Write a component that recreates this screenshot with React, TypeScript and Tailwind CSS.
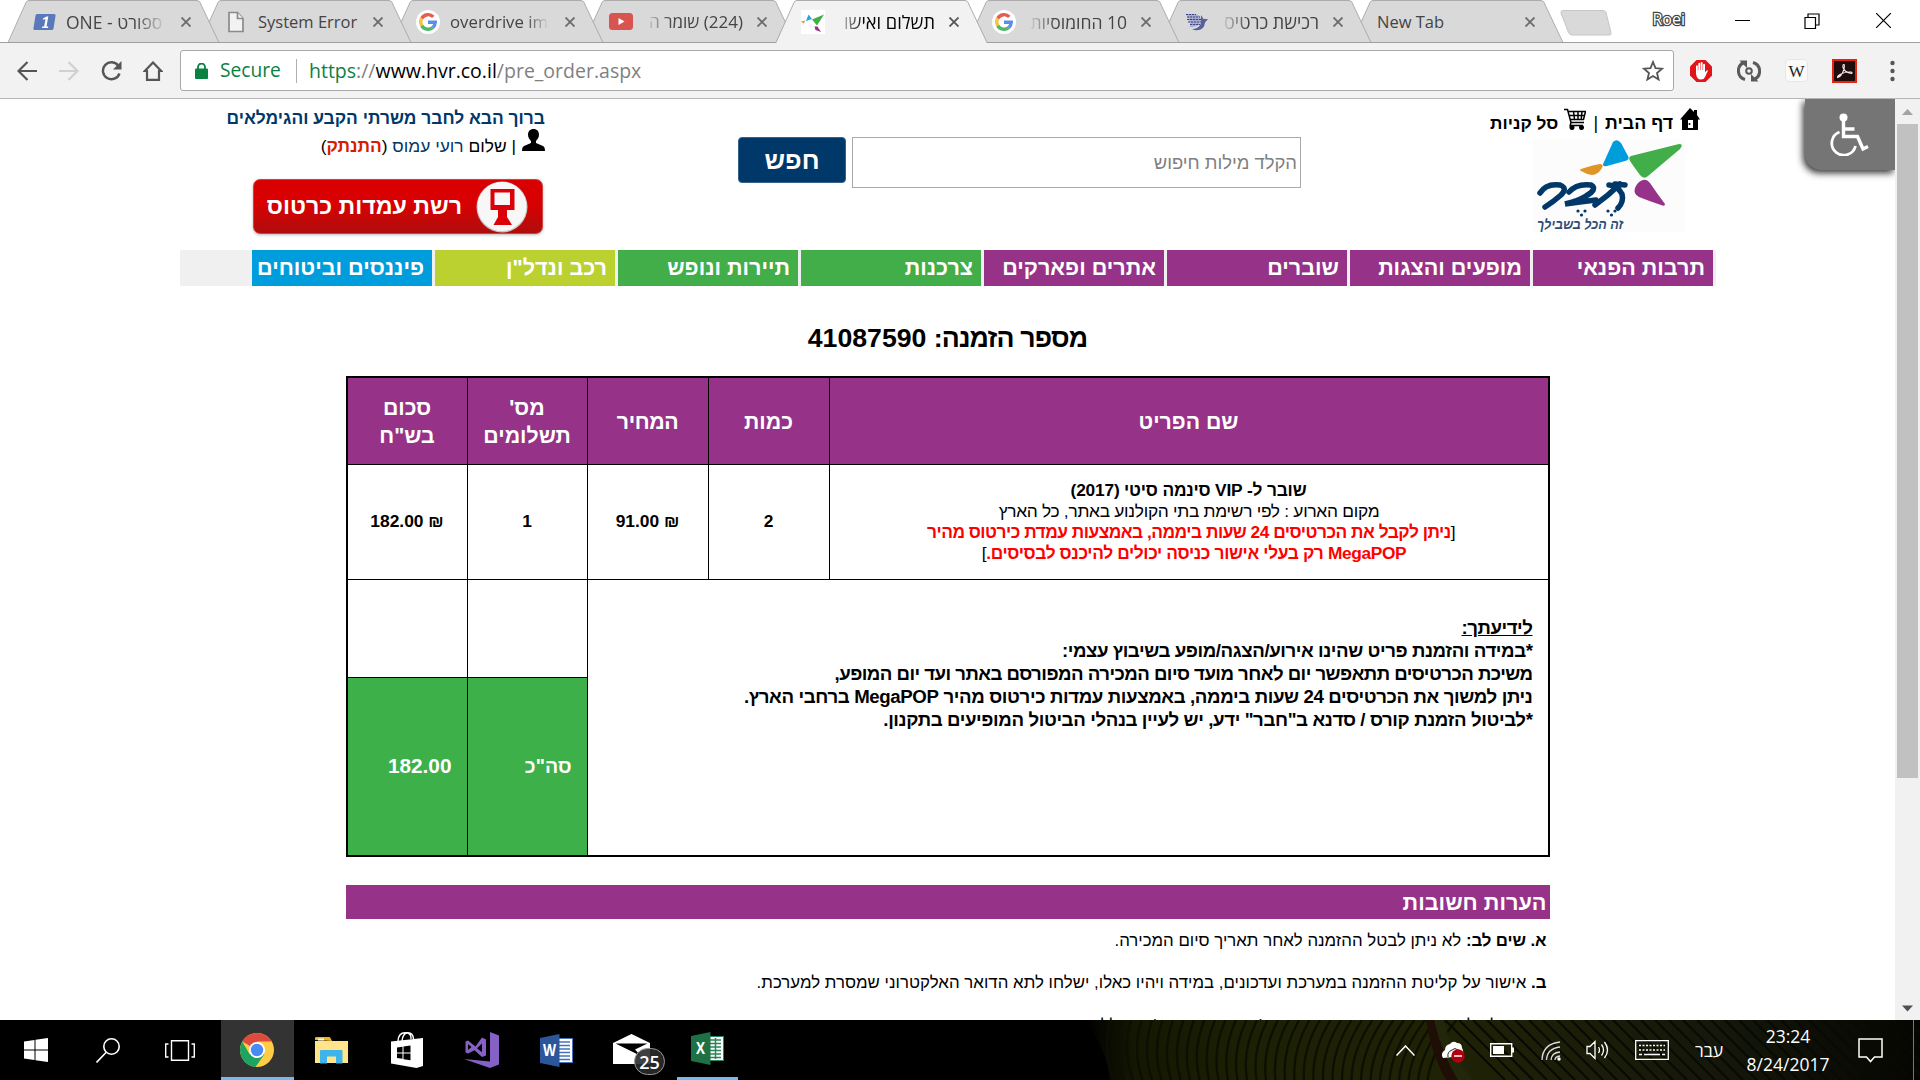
import React from 'react';
import clsx from 'clsx';

/* ---------- Favicons ---------- */

const OneIcon = () => (
  <svg viewBox="0 0 23 18" className="h-[18px] w-[23px]">
    <path d="M4 1h17a1.5 1.5 0 0 1 1.500 2l-2 12.500a2 2 0 0 1-2 1.500H2a1.500 1.500 0 0 1-1.500-2L2.500 2.500A2 2 0 0 1 4 1z" fill="#5b78bb" />
    <path d="M10 5.500 13.500 3.500h1.800L13.500 13.500h1.800l-.3 1.500H9l.3-1.500h1.900l1.300-7.500-2.700.8z" fill="#fff" />
  </svg>
);

const FileIcon = () => (
  <svg viewBox="0 0 18 22" className="ml-[2px] h-[22px] w-[18px]" fill="#f2f2f2" stroke="#8b8b8b" strokeWidth="1.700">
    <path d="M2 1.500h8.500l5.500 6v13H2z" />
    <path d="M10.500 1.500v6H16" />
  </svg>
);

const GoogleIcon = () => (
  <svg viewBox="0 0 24 24" className="-ml-px h-6 w-6">
    <circle cx="12" cy="12" r="12" fill="#fff" />
    <g fill="none" strokeWidth="3.400">
      <path d="M17.300 6.900A7.300 7.300 0 0 0 5.700 8.400" stroke="#e75b50" />
      <path d="M5.700 8.400a7.300 7.300 0 0 0 0 7.200" stroke="#f7c53c" />
      <path d="M5.700 15.600a7.300 7.300 0 0 0 11 2" stroke="#55b56b" />
      <path d="M16.700 17.600A7.300 7.300 0 0 0 19.300 12.300H12" stroke="#5a8df0" />
    </g>
  </svg>
);

const YoutubeIcon = () => (
  <svg viewBox="0 0 24 17" className="h-[17px] w-6">
    <rect width="24" height="17" rx="3.500" fill="#d9534f" />
    <path d="M9.500 5v7l6-3.500z" fill="#fff" />
  </svg>
);

const HvrIcon = () => (
  <svg viewBox="0 0 24 24" className="h-6 w-6">
    <rect width="24" height="24" fill="#fff" />
    <path d="M5 11 7.500 4.500 11 9z" fill="#29a3e0" />
    <path d="M0 11.500l4.500-1-2 3z" fill="#e0952a" />
    <path d="M11 9.500 23 4.500 16 15.500z" fill="#41ae49" />
    <path d="M13.500 16.500l3 0 3.500 5.500-5.500-2z" fill="#963388" />
  </svg>
);

const ShipIcon = () => (
  <svg viewBox="0 0 24 20" className="h-5 w-6">
    <path d="M1 2h9l5 2 1 4-2 5-6 2H4l2-2z" fill="#a9add0" />
    <path d="M1 2.500h10M2 5h13M2 7.500h14M3 10h13M5 12.500h10" stroke="#3d4288" strokeWidth="1.200" strokeDasharray="2.200 .8" />
    <path d="M16 3l2.500 4H23l-3 3.500-1 4c-3 4-8 5-12 2.500 5 0 8.500-2.500 9-7z" fill="#5a5f9b" />
  </svg>
);

/* ---------- Browser tabs ---------- */

type TabData = { title: string; rtl?: boolean; icon?: React.ReactNode; active?: boolean; z: string; text: string };

const fadeLeft = '[mask-image:linear-gradient(to_left,black_70%,transparent_98%)]';

const tabs: TabData[] = [
  { title: 'ONE - ספורט', icon: <OneIcon />, z: 'z-[8]', text: 'text-[17.500px] [mask-image:linear-gradient(to_right,black_68%,transparent)]' },
  { title: 'System Error', icon: <FileIcon />, z: 'z-[7]', text: 'text-[16.500px]' },
  { title: 'overdrive ima', icon: <GoogleIcon />, z: 'z-[6]', text: 'text-[16.800px] [mask-image:linear-gradient(to_right,black_75%,transparent_98%)]' },
  { title: '(224) שומר ה', rtl: true, icon: <YoutubeIcon />, z: 'z-[5]', text: `text-[17px] ${fadeLeft}` },
  { title: 'תשלום ואישו', rtl: true, icon: <HvrIcon />, active: true, z: 'z-[9]', text: `text-[18.200px] ${fadeLeft}` },
  { title: '10 החומוסיות', rtl: true, icon: <GoogleIcon />, z: 'z-[4]', text: `text-[17.500px] ${fadeLeft}` },
  { title: 'רכישת כרטיס', rtl: true, icon: <ShipIcon />, z: 'z-[3]', text: `text-[18px] ${fadeLeft}` },
  { title: 'New Tab', z: 'z-[2]', text: 'text-[16.500px]' },
];

function Tab({ title, rtl, icon, active, z, text }: TabData) {
  return (
    <div className={clsx('relative -mr-[19px] flex h-[43px] w-[211px] shrink-0 items-center pl-[25px]', z)}>
      <svg viewBox="0 0 211 43" className="absolute inset-0 h-[43px] w-[211px]">
        <path
          d="M0 43 L18 2.500 Q19 .5 21 .5 H189 Q191 .5 192 2.500 L211 43z"
          fill={active ? '#f2f2f2' : '#d9d9d9'}
        />
        <path d="M0 42.500 L18 2.500 Q19 .5 21 .5 H189 Q191 .5 192 2.500 L211 42.500" fill="none" stroke="#acacac" />
        {!active && <path d="M0 42.500H211" stroke="#9f9f9f" />}
      </svg>
      {icon && <span className="relative flex w-[33px] items-center">{icon}</span>}
      <span
        dir={rtl ? 'rtl' : 'ltr'}
        className={clsx(
          'relative h-7 whitespace-nowrap font-["Open_Sans",sans-serif] leading-7',
          icon ? 'w-[101px]' : 'w-[134px]',
          active ? 'text-black' : 'text-[#444]',
          text,
        )}
      >
        {title}
      </span>
      <svg viewBox="0 0 10 10" className="relative ml-3.5 h-2.5 w-2.5" stroke={active ? '#555' : '#6b6b6b'} strokeWidth="1.800">
        <path d="M.5.5l9 9M9.500.5l-9 9" />
      </svg>
    </div>
  );
}

function TabStrip() {
  return (
    <div className="relative flex h-[43px] shrink-0 border-b border-[#9f9f9f] bg-white pl-2">
      {tabs.map((t) => (
        <Tab key={t.title} {...t} />
      ))}
      <svg viewBox="0 0 52 26" className="ml-4 mt-[10px] h-[26px] w-[52px] shrink-0">
        <path d="M3 .5H43q2 0 3 2l5 20q.5 2.500-1.500 2.500H12q-2.500 0-3.500-2.500L1 3Q.5.5 3 .5z" fill="#d9d9d9" stroke="#c6c6c6" />
      </svg>
      <div className="ml-auto flex h-[41px] items-center pr-[29px]">
        <span className='mr-[50px] pb-1 font-["Open_Sans",sans-serif] text-[16px] text-white [-webkit-text-stroke:2.500px_#444] [paint-order:stroke_fill]'>
          Roei
        </span>
        <svg viewBox="0 0 15 15" className="mr-[54px] h-[15px] w-[15px]" stroke="#000"><path d="M0 7.500h15" /></svg>
        <svg viewBox="0 0 16 16" className="mr-[56px] h-4 w-4" fill="none" stroke="#000" strokeWidth="1.200">
          <path d="M1 4.500h10.500v11H1zM4 4.500V1h11v11h-3.500" />
        </svg>
        <svg viewBox="0 0 15 15" className="h-[15px] w-[15px]" stroke="#000" strokeWidth="1.200"><path d="M0 0l15 15M15 0L0 15" /></svg>
      </div>
    </div>
  );
}

/* ---------- Browser toolbar ---------- */

function Toolbar() {
  return (
    <div className="flex h-14 shrink-0 items-center border-b border-[#b6b6b6] bg-[#f2f2f2] pl-[17px]">
      <svg viewBox="0 0 20 20" className="mr-[22px] h-5 w-5" fill="none" stroke="#555" strokeWidth="2.200">
        <path d="M10.500 1 1.500 10l9 9M1.500 10H20" />
      </svg>
      <svg viewBox="0 0 20 20" className="mr-[22px] h-5 w-5" fill="none" stroke="#d0d0d0" strokeWidth="2.200">
        <path d="M9.500 1l9 9-9 9M18.500 10H0" />
      </svg>
      <svg viewBox="0 0 21 20" className="mr-[21px] h-5 w-[21px]" fill="none" stroke="#555" strokeWidth="2.400">
        <path d="M17.500 5A8.500 8.500 0 1 0 18.500 12.500" />
        <path d="M20.500 0v8.500h-8.500z" fill="#555" stroke="none" />
      </svg>
      <svg viewBox="0 0 20 20" className="mr-[17px] h-5 w-5" fill="none" stroke="#555" strokeWidth="2.200">
        <path d="M10 1.500 1.800 10H4v8.800h12V10h2.200z" />
      </svg>
      <div className='flex h-[41px] w-[1494px] items-center rounded-[3px] border border-[#a9a9a9] bg-white pl-[14px] pr-[9px] font-["Open_Sans",sans-serif] text-[19.2px]'>
        <svg viewBox="0 0 13 16" className="mr-3 h-4 w-[13px]">
          <rect y="5.500" width="13" height="10.500" rx="1" fill="#0b8043" />
          <path d="M3 6V4a3.500 3.500 0 0 1 7 0v2" fill="none" stroke="#0b8043" strokeWidth="1.800" />
        </svg>
        <span className="w-[61px] text-[#0b8043]">Secure</span>
        <span className="ml-[15px] mr-3 h-6 w-px bg-[#b0b0b0]" />
        <span className="text-[19.500px] text-[#808080]">
          <span className="text-[#0b8043]">https</span>://<span className="text-black">www.hvr.co.il</span>/pre_order.aspx
        </span>
        <svg viewBox="0 0 22 21" className="ml-auto h-[21px] w-[22px]" fill="none" stroke="#555" strokeWidth="1.800">
          <path d="M11 2l2.500 6.200 6.500.5-5 4.300 1.600 6.500L11 16l-5.600 3.500L7 13 2 8.700l6.500-.5z" />
        </svg>
      </div>
      <svg viewBox="0 0 24 24" className="ml-[15px] h-6 w-6">
        <path d="M7.500 1h9L23 7.500v9L16.500 23h-9L1 16.500v-9z" fill="#e0151a" />
        <path d="M7 14.500V7q1-1.500 1.800 0v4.500h.5V4.500q1-1.500 1.900 0V11h.5V3.800q1-1.500 1.900 0V11h.5V5.500q1-1.500 1.900 0v8l1.200-1.800q1.500-1 1.600.4L16 18q-1 2.500-4 2.500-4.500 0-5-6z" fill="#fff" />
      </svg>
      <svg viewBox="0 0 24 24" className="ml-6 h-6 w-6" fill="none" stroke="#5a5a5a" strokeWidth="3">
        <path d="M7 3.500A9 9 0 0 0 8 20.500M17 20.500A9 9 0 0 0 16 3.500" />
        <path d="M2.500 1.500h7.500v7.500zM21.500 22.500h-7.500v-7.500z" fill="#5a5a5a" stroke="none" />
        <circle cx="12" cy="12" r="2.800" strokeWidth="2" />
      </svg>
      <span className="ml-6 flex h-[23px] w-[23px] items-center justify-center rounded-sm border border-[#e6e6e6] bg-[#fafafa] pt-0.5 font-['Liberation_Serif',serif] text-[17px] text-[#222]">
        W
      </span>
      <svg viewBox="0 0 25 24" className="ml-6 h-6 w-[25px]">
        <rect x="1" y="1" width="23" height="22" fill="#1e0c0e" stroke="#e8230f" strokeWidth="2" />
        <path d="M5.500 18.500q4-1 6.200-7.500 1.300-4.800.3-5.500-1.500-.3-1 3 1.500 5 8.500 6 1.500-.8-.5-1.500-6-.5-11 2.500-3 2-2.500 3z" fill="none" stroke="#f3e9e9" strokeWidth="1.100" />
      </svg>
      <svg viewBox="0 0 5 22" className="ml-[33px] h-[22px] w-[5px]" fill="#555">
        <circle cx="2.500" cy="3" r="2.200" /><circle cx="2.500" cy="11" r="2.200" /><circle cx="2.500" cy="19" r="2.200" />
      </svg>
    </div>
  );
}

/* ---------- Site header ---------- */

const HvrLogo = () => (
  <svg viewBox="0 0 152 93" className="mr-[15px] mt-[9px] h-[93px] w-[152px]">
    <rect width="152" height="93" fill="#fcfcfd" />
    <path d="M80 3q4-4 8 1l7 13q2 4-3 5l-18 5q-6 1-3-4z" fill="#009ddd" />
    <path d="M48 30q12-4 19-5 4 0 2 4-4 7-10 7-6-1-11-4-2-1 0-2z" fill="#e09528" />
    <path d="M98 17q20-5 48-12 5 0 1 5l-32 27q-4 4-8-1-6-8-10-14-2-4 1-5z" fill="#41ae49" />
    <path d="M110 41q4-1 7 3 8 12 15 21 0 3-4 1-12-4-22-8-6-3-4-9 3-7 8-8z" fill="#963388" />
    <g fill="none" stroke="#003869" strokeWidth="5.500" strokeLinecap="round">
      <path d="M7 54q6-10 20-8 8 3 1 10-8 7-16 12" />
      <path d="M36 53q8-9 22-7 7 4-5 11-8 5-21 8 14-2 31-4" />
      <path d="M62 66q14-10 25-21M76 46q8 0 13 9 2 8-4 14M82 45l10 1" />
    </g>
    <g fill="#003869">
      <circle cx="45" cy="72" r="1.600" /><circle cx="52" cy="72" r="1.600" /><circle cx="48.500" cy="76" r="1.600" />
      <circle cx="75" cy="72" r="1.600" /><circle cx="82" cy="72" r="1.600" /><circle cx="78.500" cy="76" r="1.600" />
    </g>
    <text x="47" y="90" textAnchor="middle" textLength="86" lengthAdjust="spacingAndGlyphs" fontSize="14" fontStyle="italic" fontWeight="bold" fill="#2b4c75" fontFamily="Liberation Sans, sans-serif">
      זה הכל בשבילך
    </text>
  </svg>
);

function SiteHeader() {
  return (
    <div className="flex h-[151px] items-start">
      <div className="flex w-[365px] flex-col items-end pt-[9px]">
        <div dir="rtl" className="text-[17.400px] font-bold leading-5 text-[#003869]">
          ברוך הבא לחבר משרתי הקבע והגימלאים
        </div>
        <div dir="rtl" className="mt-px flex h-7 items-start gap-[6px] text-[17.400px] leading-[22px]">
          <svg viewBox="0 0 23 22" className="h-[22px] w-[23px]">
            <path d="M11.500 0c3.600 0 5.500 2.400 5.500 5.800S14.800 11 14 12v2l7 3q2 1 2 5H0q0-4 2-5l7-3v-2C8.200 11 6 9.200 6 5.800S7.900 0 11.500 0z" />
          </svg>
          <div className="pt-[6px]">
            | שלום <span className="text-[#003869]">רועי עמוס</span> (<b className="text-[#d71a00]">התנתק</b>)
          </div>
        </div>
        <div dir="rtl" className="mr-[2px] mt-[22px] flex h-[55px] w-[290px] items-center gap-[14px] rounded-[7px] border border-[#c44] bg-linear-to-b from-[#d80000] from-45% to-[#b00c0c] pr-[14px] shadow-[0_1px_3px_#bbb]">
          <svg viewBox="0 0 52 52" className="h-[52px] w-[52px] shrink-0">
            <circle cx="26" cy="26" r="25.500" fill="#c9c3c3" />
            <circle cx="26" cy="25.500" r="24.500" fill="#f7f7f7" />
            <path d="M14.500 8h24v21H31V36l5 8H17.500l4.500-8V29H14.500z" fill="#dc0008" />
            <rect x="18.500" y="11.500" width="15.500" height="12.500" fill="#f7f7f7" />
          </svg>
          <span className="whitespace-nowrap text-[23.200px] font-bold text-white">רשת עמדות כרטוס</span>
        </div>
      </div>
      <div className="ml-[193px] mt-[38px] flex items-start gap-[6px]">
        <button className="h-[46px] w-[108px] rounded-[4px] border border-[#33628c] bg-[#003869] text-[25.500px] font-bold text-white">
          חפש
        </button>
        <div dir="rtl" className="flex h-[51px] w-[449px] items-center border border-[#a9a9a9] px-[3px] text-[18.4px] text-[#808080]">
          הקלד מילות חיפוש
        </div>
      </div>
      <div className="ml-auto flex flex-col items-end pr-4 pt-[9px]">
        <div dir="rtl" className="flex h-[22px] items-start gap-[7px] text-[17.800px] font-bold leading-[31px]">
          <svg viewBox="0 0 20 22" className="h-[22px] w-5">
            <path d="M10 0l4 4V2h3v5l3 4.500h-2V22H2V11.500H0z" />
            <path d="M8 12h5v8H8z" fill="#fff" />
            <circle cx="9.500" cy="16" r="1" />
          </svg>
          <span>דף הבית</span>
          <span className="font-normal">|</span>
          <svg viewBox="0 0 22 22" className="h-[22px] w-[22px]" fill="none" stroke="#000" strokeWidth="1.500">
            <path d="M0 1.500h3.500L7 14.500h13M4 3.500h17.500L19.500 11.500H6M5 7.500h16M9.500 3.500l1 8M14 3.500v8M18 3.500l-.8 8M7 14.500l-.8 3H19" />
            <circle cx="8" cy="19.500" r="1.800" fill="#000" /><circle cx="17.500" cy="19.500" r="1.800" fill="#000" />
          </svg>
          <span className="-mr-px text-[17.300px]">סל קניות</span>
        </div>
        <HvrLogo />
      </div>
    </div>
  );
}

const navItems = [
  { label: 'תרבות הפנאי', color: 'bg-[#963388]' },
  { label: 'מופעים והצגות', color: 'bg-[#963388]' },
  { label: 'שוברים', color: 'bg-[#963388]' },
  { label: 'אתרים ופארקים', color: 'bg-[#963388]' },
  { label: 'צרכנות', color: 'bg-[#41ae49]' },
  { label: 'תיירות ונופש', color: 'bg-[#41ae49]' },
  { label: 'רכב ונדל"ן', color: 'bg-[#bbd12f]' },
  { label: 'פיננסים וביטוחים', color: 'bg-[#009ddd]' },
];

const SiteNav = () => (
  <nav dir="rtl" className="flex h-9 gap-[3px] bg-[#f0f0f0] pr-[3px]">
    {navItems.map((n) => (
      <a key={n.label} className={clsx('w-[180px] whitespace-nowrap pr-2 text-[21.600px] font-bold leading-[35px] text-white', n.color)}>
        {n.label}
      </a>
    ))}
  </nav>
);

/* ---------- Order table ---------- */

const th = 'flex items-center justify-center border-b border-black bg-[#963388] pt-0.5 text-center text-[21.300px] leading-7 text-white';
const td = 'flex items-center justify-center border-b border-black pb-0.5 text-[17.400px]';
const line = 'border-r border-black';
const green = 'flex items-center bg-[#3eb04a] pr-[15px] text-white';

const OrderTable = () => (
  <div
    dir="rtl"
    className="mx-auto mt-[23px] grid w-[1204px] grid-cols-[718px_121px_121px_120px_120px] grid-rows-[87px_115px_98px_177px] border-2 border-black font-bold"
  >
    <div className={th}>שם הפריט</div>
    <div className={clsx(th, line)}>כמות</div>
    <div className={clsx(th, line, 'tracking-[-0.400px]')}>המחיר</div>
    <div className={clsx(th, line)}>מס'<br />תשלומים</div>
    <div className={clsx(th, line)}>סכום<br />בש"ח</div>

    <div className="border-b border-black pt-[15px] text-center text-[17.330px] leading-[21px]">
      <div className="tracking-[-0.200px]">שובר ל- VIP סינמה סיטי (2017)</div>
      <div className="pl-px font-normal tracking-[-0.280px]">מקום הארוע : לפי רשימת בתי הקולנוע באתר, כל הארץ</div>
      <div className="pl-[5px] tracking-[-0.500px] text-[#f00]">
        <span className="font-normal text-black">[</span>ניתן לקבל את הכרטיסים 24 שעות ביממה, באמצעות עמדת כירטוס מהיר
      </div>
      <div className="pl-[11px] tracking-[-0.370px] text-[#f00]">
        MegaPOP רק בעלי אישור כניסה יכולים להיכנס לבסיסים.<span className="font-normal text-black">]</span>
      </div>
    </div>
    <div className={clsx(td, line)}>2</div>
    <div dir="ltr" className={clsx(td, line)}>91.00 ₪</div>
    <div className={clsx(td, line)}>1</div>
    <div dir="ltr" className={clsx(td, line)}>182.00 ₪</div>

    <div className="col-span-3 row-span-2 pr-[15px] pt-9 text-[18.670px] leading-[23px]">
      <div className="tracking-[-0.460px] underline">לידיעתך:</div>
      <div className="tracking-[-0.430px]">*במידה והזמנת פריט שהינו אירוע/הצגה/מופע בשיבוץ עצמי:</div>
      <div className="tracking-[-0.550px]">משיכת הכרטיסים תתאפשר יום לאחר מועד סיום המכירה המפורסם באתר ועד יום המופע,</div>
      <div className="tracking-[-0.380px]">ניתן למשוך את הכרטיסים 24 שעות ביממה, באמצעות עמדות כירטוס מהיר MegaPOP ברחבי הארץ.</div>
      <div className="tracking-[-0.395px]">*לביטול הזמנת קורס / סדנא ב"חבר" ידע, יש לעיין בנהלי הביטול המופיעים בתקנון.</div>
    </div>
    <div className={clsx(line, 'border-b')} />
    <div className={clsx(line, 'border-b')} />
    <div className={clsx(green, line, 'text-[19.500px]')}>סה"כ</div>
    <div className={clsx(green, line, 'pb-0.5 text-[20.800px]')}>182.00</div>
  </div>
);

const Notes = () => (
  <div dir="rtl" className="mx-auto mt-7 w-[1204px] whitespace-nowrap text-[16.830px] leading-5">
    <h2 className="h-[34px] bg-[#963388] pr-[3px] text-[21.700px] font-bold leading-9 text-white">הערות חשובות</h2>
    <p className="mt-3 pr-[3px]"><b className="tracking-[-0.100px]">א. שים לב:</b> לא ניתן לבטל ההזמנה לאחר תאריך סיום המכירה.</p>
    <p className="mt-[22px] pr-[3px] tracking-[0.020px]">
      <b>ב.</b> אישור על קליטת ההזמנה במערכת ועדכונים, במידה ויהיו כאלו, ישלחו לתא הדואר האלקטרוני שמסרת למערכת.
    </p>
    <p className="mt-[23px] pr-[3px]"><b>ג.</b> ביטול על ידי חבר מועדון ייעשה בכתב (באמצעות אתר) וגם ללא</p>
  </div>
);

/* ---------- Page frame ---------- */

const Scrollbar = () => (
  <div className="flex w-[25px] shrink-0 flex-col items-center bg-[#f1f1f1]">
    <svg viewBox="0 0 25 25" className="h-[25px] w-[25px]"><path d="M7 16l5.500-6 5.500 6z" fill="#a3a3a3" /></svg>
    <div className="h-[654px] w-[21px] bg-[#c1c1c1]" />
    <svg viewBox="0 0 25 25" className="mt-auto h-[25px] w-[25px]"><path d="M7 10.500l5.500 6 5.500-6z" fill="#505050" /></svg>
  </div>
);

const AccessibilityButton = () => (
  <div className="absolute right-[25px] top-0 flex h-[71px] w-[90px] items-center justify-center rounded-bl-[16px] bg-[#757575] pr-[2px] shadow-[-2px_3px_7px_#333] [clip-path:inset(0_0_-14px_-14px)]">
    <svg viewBox="0 0 40 43" className="h-[43px] w-10" fill="none" stroke="#fff" strokeWidth="3.400">
      <circle cx="14.500" cy="4.500" r="4" fill="#fff" stroke="none" />
      <path d="M14.500 8v15.500H28.500l5.500 12.500 5-2.500M14.500 16h11" />
      <path d="M10.500 19A12 12 0 1 0 26.500 33" strokeWidth="2.800" />
    </svg>
  </div>
);

const Page = () => (
  <div className='relative flex h-[921px] shrink-0 overflow-hidden bg-white font-["Liberation_Sans",Arial,sans-serif] text-black'>
    <main className="min-w-0 flex-1">
      <div className="ml-[180px] w-[1536px]">
        <SiteHeader />
        <SiteNav />
      </div>
      <h1 dir="rtl" className="mt-[37px] text-center text-[26.670px] font-bold leading-[30px]">
        <span className="tracking-[-0.850px]">מספר הזמנה:</span> 41087590
      </h1>
      <OrderTable />
      <Notes />
    </main>
    <Scrollbar />
    <AccessibilityButton />
  </div>
);

/* ---------- Taskbar ---------- */

const veins = Array.from({ length: 34 }, (_, i) => i);

const LeafWallpaper = () => (
  <svg viewBox="0 0 840 60" preserveAspectRatio="none" className="absolute right-0 top-0 h-[60px] w-[840px]">
    <defs>
      <linearGradient id="leaf" x1="0" x2="1" y1="0" y2="0">
        <stop offset="0" stopColor="#000" />
        <stop offset=".06" stopColor="#141802" />
        <stop offset=".2" stopColor="#1c2004" />
        <stop offset=".45" stopColor="#202206" />
        <stop offset=".75" stopColor="#15180a" />
        <stop offset="1" stopColor="#050603" />
      </linearGradient>
    </defs>
    <path d="M5 0H840V60H30Q26 28 5 0z" fill="url(#leaf)" />
    <g fill="none" stroke="#0c0f02" strokeWidth="2.200">
      {veins.map((i) => (
        <path key={i} d={`M${30 + i * 10.500} 0Q${22 + i * 10} 30 ${34 + i * 9.500} 60`} />
      ))}
    </g>
    <g stroke="#080a03" strokeWidth="2">
      {veins.map((i) => (
        <path key={i} d={`M${365 + i * 14} 0L${425 + i * 14} 60`} />
      ))}
    </g>
    <path d="M346 0h8q8 34 24 60h-12Q352 36 346 0z" fill="#1f0e05" />
    <path d="M354 0h10q8 34 28 60h-14Q362 34 354 0z" fill="#22260a" />
  </svg>
);

function OfficeIcon({ letter, dark, light, grid }: { letter: string; dark: string; light: string; grid?: boolean }) {
  return (
    <svg viewBox="0 0 33 33" className="h-[33px] w-[33px]">
      <rect x="17" y="4.500" width="15.500" height="24" fill="#fff" stroke={light} />
      <path d="M19 8h11M19 11.500h11M19 15h11M19 18.500h11M19 22h11M19 25.500h11" stroke={light} strokeWidth="1.500" />
      {grid && <path d="M24.500 6v21" stroke={light} strokeWidth="1.500" />}
      <path d="M0 4 19.500 0v33L0 29z" fill={dark} />
      <text x="9.500" y="22" textAnchor="middle" textLength={letter === 'W' ? 13 : 9} lengthAdjust="spacingAndGlyphs" fontSize="16" fontWeight="bold" fill="#fff" fontFamily="Open Sans, sans-serif">{letter}</text>
    </svg>
  );
}

const cell = 'relative flex h-[60px] w-[73px] shrink-0 items-center justify-center';

function Taskbar() {
  return (
    <div className='relative flex h-[60px] shrink-0 overflow-hidden bg-black font-["Open_Sans",sans-serif] text-white'>
      <LeafWallpaper />
      <div className={cell}>
        <svg viewBox="0 0 24 24" className="mr-px h-6 w-6" fill="#fff">
          <path d="M0 3.500 10.500 2v9.500H0zM11.500 1.800 24 0v11.500H11.500zM0 12.500h10.500V22L0 20.500zM11.500 12.500H24V24l-12.500-1.800z" />
        </svg>
      </div>
      <div className={cell}>
        <svg viewBox="0 0 24 25" className="ml-[-3px] h-[25px] w-6" fill="none" stroke="#fff" strokeWidth="1.600">
          <circle cx="15.500" cy="8.500" r="7.700" /><path d="M10 14.500.5 24.500" />
        </svg>
      </div>
      <div className={cell}>
        <svg viewBox="0 0 30 21" className="ml-[-5px] h-[21px] w-[30px]" fill="none" stroke="#fff" strokeWidth="1.400">
          <path d="M6.500.7h17v19.600h-17zM3.500 4H.7v13h2.800M26.500 4h2.800v13h-2.800" />
        </svg>
      </div>
      <div className="relative ml-[2px] flex h-[60px] w-[73px] shrink-0 items-center justify-center border-b-[3px] border-[#76b9ed] bg-[#333]">
        <svg viewBox="0 0 34 34" className="mr-px mt-[3px] h-[34px] w-[34px]">
          <circle cx="17" cy="17" r="17" fill="#fc4" />
          <path d="M17 17 2.300 8.500A17 17 0 0 1 31.700 8.500H17z" fill="#dd4b3e" />
          <path d="M2.300 8.500A17 17 0 0 0 15.500 34L24.400 21.200 17 17 9.600 21.200z" fill="#1da462" />
          <circle cx="17" cy="17" r="8" fill="#fff" /><circle cx="17" cy="17" r="6.200" fill="#4a8af4" />
        </svg>
      </div>
      <div className="relative flex h-[60px] w-[75px] shrink-0 items-center justify-center">
        <svg viewBox="0 0 33 27" className="h-[27px] w-[33px]">
          <path d="M0 3V1q0-1 1-1h13q1 0 1.500 1l1.500 3z" fill="#f0b429" /><path d="M3 1.500h6v2H3z" fill="#fff" />
          <path d="M0 4h33v22H0z" fill="#ffe48c" />
          <path d="M5 14q0-1 1-1h20.500q1 0 1 1v12.500h-6.500v-7h-9v7H5z" fill="#3fb4ea" />
        </svg>
      </div>
      <div className="relative flex h-[60px] w-[75px] shrink-0 items-center justify-center">
        <svg viewBox="0 0 32 36" className="h-9 w-8">
          <path d="M7 9Q7.500.8 14 .8T20 7M11 9Q12 .8 17 .8T22.500 7" fill="none" stroke="#fff" strokeWidth="1.400" />
          <path d="M0 9.500 32 6v28L25.500 36 0 31.500z" fill="#fff" />
          <path d="M6 15.500l5.500-.8v5.800H6zM12.500 14.500l7-1v7h-7zM6 21.500h5.500v5.300L6 26zM12.500 21.500h7v6.700l-7-1z" />
        </svg>
      </div>
      <div className="relative flex h-[60px] w-[75px] shrink-0 items-center justify-center">
        <svg viewBox="0 0 35 36" className="h-9 w-[35px]" fill="#8661c5">
          <path d="M26 0l9 3.500v29L26 36 0 27l26 2.500z" />
          <path d="M1.500 9.500 4 8.500l7.500 6L18 5.500 22 7.500v16L18 25l-7.500-6.800L4 21.500l-2.500-1zM4 12v6l3.500-3zM13 16.200l5 4V11.500z" fillRule="evenodd" />
        </svg>
      </div>
      <div className="relative flex h-[60px] w-[74px] shrink-0 items-center justify-center">
        <OfficeIcon letter="W" dark="#2b579a" light="#4573ba" />
      </div>
      <div className="relative flex h-[60px] w-[84px] shrink-0 items-center pl-[20px]">
        <svg viewBox="0 0 37 30" className="mb-[3px] h-[30px] w-[37px]">
          <path d="M0 9 18.500 0 37 9v21H0z" fill="#fff" />
          <path d="M2.500 9.500H34.500L22 15.500l6 6.500z" />
        </svg>
        <span className="absolute left-[41px] top-[28px] flex h-[27px] w-[31px] items-center justify-center rounded-full border border-[#999] bg-[#2b2b2be6] text-[18px] font-semibold leading-none">
          25
        </span>
      </div>
      <div className="relative flex h-[60px] w-[61px] shrink-0 items-center justify-center border-b-[3px] border-[#76b9ed]">
        <OfficeIcon letter="X" dark="#1e7145" light="#2a8557" grid />
      </div>

      <div className="relative ml-auto flex items-center">
        <svg viewBox="0 0 19 11" className="mr-[26px] h-[11px] w-[19px]" fill="none" stroke="#fff" strokeWidth="1.500"><path d="M.5 10.500 9.500 1l9 9.500" /></svg>
        <svg viewBox="0 0 24 22" className="mr-[25px] mt-[3px] h-[22px] w-6">
          <path d="M2 17q-3-5 2-8 0-5 5-6 3-4 7-1 5 0 5 5 2 3 1 8z" fill="#fff" />
          <path d="M7 16q-1-5 4-7 3-3 6 0" fill="none" stroke="#222" />
          <circle cx="17" cy="15" r="6.700" fill="#b00010" /><path d="M13 15h8" stroke="#fff" strokeWidth="1.500" />
        </svg>
        <svg viewBox="0 0 24 14" className="mr-[27px] h-3.5 w-6"><path d="M.7.7h21v12.600H.7z" fill="none" stroke="#fff" strokeWidth="1.400" /><path d="M3 3h11v8H3zM22 4.500h2v5h-2z" fill="#fff" /></svg>
        <svg viewBox="0 0 20 20" className="mr-[25px] mt-[2px] h-5 w-5" fill="none" stroke="#ddd" strokeWidth="1.300">
          <path d="M1 19Q1.500 3 19 1M5.500 19Q6 7.500 19 6M10 19q.5-7.500 9-8M14 19q0-3.500 5-4" /><circle cx="18" cy="18" r="1.700" fill="#fff" stroke="none" />
        </svg>
        <svg viewBox="0 0 23 20" className="mr-[26px] h-5 w-[23px]" fill="none" stroke="#fff" strokeWidth="1.300">
          <path d="M1 6.500h3L9 1.500v17l-5-5H1zM12.500 7q2 3 0 6M15.500 4.500q4 5.500 0 11M18.500 2q6 8 0 16" />
        </svg>
        <svg viewBox="0 0 34 20" className="h-5 w-[34px]" fill="none" stroke="#fff" strokeWidth="1.300">
          <path d="M.7.7h32.600v18.600H.7z" /><path d="M4 5.500h26M4 10h26" strokeDasharray="2 1.500" /><path d="M4 14.500h3M9 14.500h16M27 14.500h3" />
        </svg>
        <span className="ml-[25px] w-[30px] text-center text-[17.500px]">עבר</span>
        <div className="ml-[19px] flex w-[90px] flex-col text-center text-[17.500px] leading-[28px]">
          <span>23:24</span>
          <span>8/24/2017</span>
        </div>
        <svg viewBox="0 0 25 25" className="ml-[25px] mr-[30px] h-[25px] w-[25px]" fill="none" stroke="#fff" strokeWidth="1.500">
          <path d="M1 1h23v18h-7.500L12.500 23.500 8.500 19H1z" />
        </svg>
        <span className="mr-[6px] h-[60px] w-px bg-[#777]" />
      </div>
    </div>
  );
}

export default function App() {
  return (
    <div className="flex h-[1080px] w-[1920px] flex-col overflow-hidden bg-white">
      <TabStrip />
      <Toolbar />
      <Page />
      <Taskbar />
    </div>
  );
}
